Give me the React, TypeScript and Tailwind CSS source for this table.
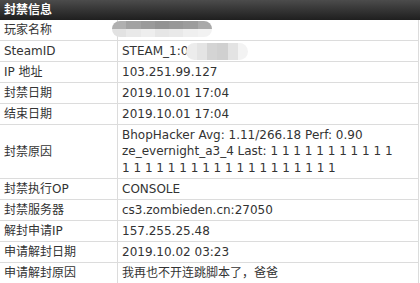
import React from 'react'

const FONT = '[font-family:"DejaVu_Sans","Noto_Sans_CJK_SC",sans-serif]'

type Row = { label: string; value: React.ReactNode; tall?: boolean }

const NameBlur = () => {
    const top = ['#b0b0b0', '#a2a2a2', '#9a9a9a', '#939393', '#979797', '#9c9c9c', '#a9a9a9']
    const bottom = ['#e2e2e2', '#e9e9e9', '#eeeeee', '#e6e6e6', '#e9e9e9', '#efefef', '#f2f2f2']
    return (
        <div className='flex flex-col w-[100px] h-[16px] rounded-full overflow-hidden blur-[0.6px] -ml-[10px] -mt-[2px]'>
            <div className='flex h-[8px]'>
                {top.map((c, i) => <div key={i} className='flex-1' style={{ background: c }} />)}
            </div>
            <div className='flex h-[8px]'>
                {bottom.map((c, i) => <div key={i} className='flex-1' style={{ background: c }} />)}
            </div>
        </div>
    )
}

const SteamBlur = () => {
    const cols = ['#ececec', '#e4e4e4', '#d4d4d4', '#d0d0d0', '#e3e3e3', '#f3f3f3']
    return (
        <div className='inline-flex align-middle w-[62px] h-[17px] rounded-full overflow-hidden blur-[0.6px] -ml-[2px]'>
            {cols.map((c, i) => <div key={i} className='flex-1' style={{ background: c }} />)}
        </div>
    )
}

const rows: Row[] = [
    { label: '玩家名称', value: <NameBlur /> },
    { label: 'SteamID', value: <span className='flex items-center'>STEAM_1:0<SteamBlur /></span> },
    { label: 'IP 地址', value: '103.251.99.127' },
    { label: '封禁日期', value: '2019.10.01 17:04' },
    { label: '结束日期', value: '2019.10.01 17:04' },
    {
        label: '封禁原因',
        tall: true,
        value: (
            <>
                BhopHacker Avg: 1.11/266.18 Perf: 0.90<br />
                ze_evernight_a3_4 Last: 1 1 1 1 1 1 1 1 1 1 1<br />
                1 1 1 1 1 1 1 1 1 1 1 1 1 1 1 1 1 1 1
            </>
        ),
    },
    { label: '封禁执行OP', value: 'CONSOLE' },
    { label: '封禁服务器', value: 'cs3.zombieden.cn:27050' },
    { label: '解封申请IP', value: '157.255.25.48' },
    { label: '申请解封日期', value: '2019.10.02 03:23' },
    { label: '申请解封原因', value: '我再也不开连跳脚本了，爸爸' },
]

export default function App() {
    return (
        <div className={`w-[420px] h-[283px] bg-white overflow-hidden text-[12px] text-[#333] ${FONT}`}>
            <div className='h-[20px] bg-gradient-to-b from-[#4c4c4c] to-[#1f1f1f] text-white font-bold text-[12px] leading-[20px] px-[4px]'>
                封禁信息
            </div>
            <div className='w-[419px] border-r border-[#dcdcdc]'>
                {rows.map((r, i) => (
                    <div key={i} className={`flex border-b border-[#dcdcdc] ${r.tall ? 'h-[54px]' : 'h-[21px]'}`}>
                        <div className='w-[118px] shrink-0 border-r border-[#dcdcdc] px-[4px] flex items-center whitespace-nowrap'>
                            {r.label}
                        </div>
                        <div className={`flex-1 px-[4px] flex items-center whitespace-nowrap ${r.tall ? 'leading-[16.5px]' : ''}`}>
                            <div>{r.value}</div>
                        </div>
                    </div>
                ))}
            </div>
        </div>
    )
}
